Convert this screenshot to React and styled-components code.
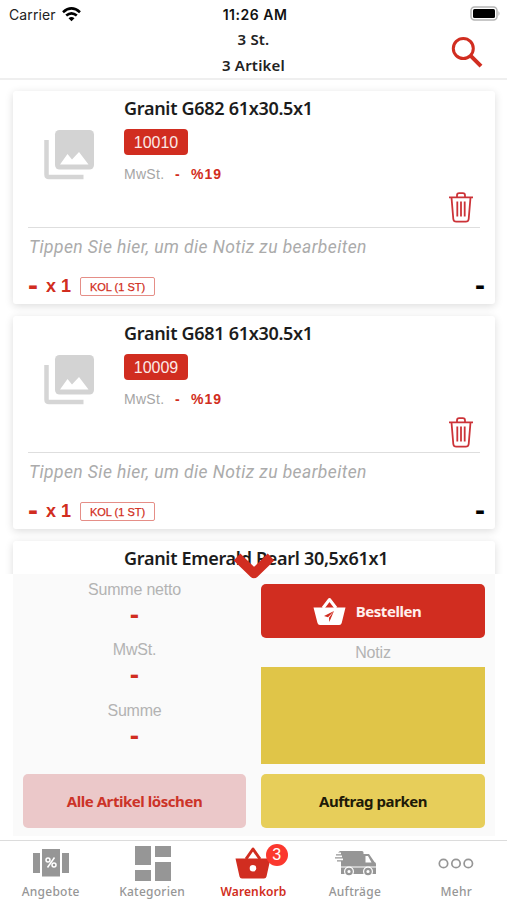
import styled, { createGlobalStyle, css } from "styled-components";

const GlobalStyle = createGlobalStyle`
  * {
    box-sizing: border-box;
  }
  body {
    margin: 0;
    background: #fff;
    font-family: "Liberation Sans", sans-serif;
  }
  button {
    border: none;
    padding: 0;
    background: none;
  }
`;

const red = "#d12d20";

const Screen = styled.div`
  display: flex;
  flex-direction: column;
  width: 507px;
  height: 900px;
  overflow: hidden;
  background: #fff;
`;

const StatusBar = styled.div`
  display: grid;
  grid-template-columns: 1fr auto 1fr;
  align-items: center;
  height: 27px;
  padding: 1px 6px 0 9px;
  font-family: Inter, sans-serif;
  font-size: 14px;
  color: #222;
`;
const Carrier = styled.div`
  display: flex;
  align-items: center;
  gap: 6px;
  letter-spacing: 0.1px;
`;
const Clock = styled.div`
  font-weight: 600;
  letter-spacing: 0.5px;
  color: #111;
`;
const BatteryIcon = styled.svg`
  justify-self: end;
  margin-top: -2px;
`;

const Header = styled.header`
  display: grid;
  grid-template-columns: 1fr auto 1fr;
  height: 53px;
  border-bottom: 2px solid #efefef;
`;
const Totals = styled.div`
  grid-column: 2;
  font-family: "Noto Sans", sans-serif;
  font-size: 15px;
  font-weight: 600;
  letter-spacing: 0.2px;
  line-height: 25.5px;
  text-align: center;
  color: #222;
`;
const SearchButton = styled.button`
  justify-self: end;
  width: 32px;
  height: 32px;
  margin: 9px 24px 0 0;
`;

const List = styled.main`
  display: flex;
  flex-direction: column;
  gap: 12px;
  height: 494px;
  padding: 11px 12px 0 13px;
  overflow: hidden;
`;
const Card = styled.article`
  display: flex;
  flex-direction: column;
  flex: none;
  height: 213px;
  padding: 0 15px;
  border-radius: 3px;
  background: #fff;
  box-shadow: 0 2px 8px rgba(0, 0, 0, 0.14);
`;
const CardTop = styled.div`
  display: flex;
  height: 137px;
  border-bottom: 1px solid #dedede;
`;
const Thumb = styled.svg`
  flex: none;
  margin: 38px 29px 0 16px;
`;
const Info = styled.div`
  flex: 1;
`;
const Title = styled.h2`
  margin: 0;
  padding: 3px 0 1px;
  font-family: "Noto Sans", sans-serif;
  font-size: 18px;
  font-weight: 600;
  letter-spacing: -0.3px;
  line-height: 28px;
  white-space: nowrap;
  color: #1c1c1c;
`;
const Sku = styled.div`
  width: 64px;
  height: 26px;
  margin-top: 6px;
  border-radius: 4px;
  background: ${red};
  color: #fbe9e7;
  font-size: 16px;
  line-height: 27px;
  text-align: center;
`;
const Tax = styled.div`
  display: flex;
  gap: 10.5px;
  margin-top: 10px;
  font-size: 14px;
  letter-spacing: 0.3px;
  line-height: 18px;
  color: #a5a5a5;

  b {
    color: ${red};
    letter-spacing: 1px;
  }
`;
const TrashButton = styled.button`
  align-self: flex-end;
  width: 24px;
  height: 31px;
  margin: 0 7.5px 4px 0;
`;
const Note = styled.div`
  height: 40px;
  padding-left: 1px;
  font-family: Roboto, sans-serif;
  font-size: 17.5px;
  font-style: italic;
  letter-spacing: 0.41px;
  line-height: 39px;
  white-space: nowrap;
  color: #ababab;
`;
const CardFoot = styled.div`
  display: flex;
  align-items: center;
  height: 36px;
  margin-right: -5px;
`;
const Dash = styled.b`
  height: 24px;
  color: ${(p) => p.$color || red};
  font-size: ${(p) => p.$size || 30}px;
  line-height: 22px;
`;
const Quantity = styled.b`
  margin: 0 9px 0 8px;
  font-size: 18px;
  color: ${red};
`;
const Unit = styled.span`
  width: 75px;
  height: 19px;
  margin-right: auto;
  border: 1px solid #e58e87;
  border-radius: 2px;
  color: ${red};
  font-size: 11px;
  line-height: 18px;
  text-align: center;
  -webkit-text-stroke: 0.25px ${red};
`;

const Summary = styled.section`
  position: relative;
  display: grid;
  grid-template-columns: 223px 224px;
  grid-template-rows: 181px 54px;
  column-gap: 15px;
  row-gap: 9px;
  height: 262px;
  margin: 0 12px 4px 13px;
  padding: 10px;
  background: #fafafa;
`;
/* hangs over the last visible card */
const CollapseButton = styled.button`
  position: absolute;
  top: -24px;
  left: 219px;
  width: 44px;
  height: 32px;
`;
const Sums = styled.div`
  display: flex;
  flex-direction: column;
  align-items: center;
`;
const Label = styled.div`
  height: 29px;
  font-size: 16px;
  letter-spacing: -0.2px;
  line-height: 30px;
  color: #b3b3b3;
`;
const Sum = styled.div`
  display: flex;
  flex-direction: column;
  align-items: center;
  height: 60.5px;
  margin-top: ${(p) => (p.$first ? "-9.5px" : 0)};
`;
const Order = styled.div`
  display: flex;
  flex-direction: column;
`;
const ActionButton = styled.button`
  display: flex;
  align-items: center;
  justify-content: center;
  gap: 10px;
  height: 54px;
  border-radius: 5px;
  font-family: "Noto Sans", sans-serif;
  font-size: 15px;
  font-weight: 700;
  letter-spacing: -0.45px;
  color: #1e1a08;
  background: #e7ce5a;

  ${(p) =>
    p.$kind === "primary" &&
    css`
      padding-right: 12px;
      color: #fff0ee;
      background: #d12d20;
    `}
  ${(p) =>
    p.$kind === "danger" &&
    css`
      color: #cc3328;
      background: #ebc8c9;
    `}
`;
const NoteLabel = styled(Label)`
  text-align: center;
`;
const NoteArea = styled.div`
  height: 97px;
  background: #e0c548;
`;

const TabBar = styled.nav`
  display: grid;
  grid-template-columns: repeat(5, 1fr);
  height: 60px;
  border-top: 1px solid #dcdcdc;
`;
const Tab = styled.div`
  position: relative;
  display: flex;
  flex-direction: column;
  align-items: center;
  padding-top: 2px;
  font-family: "Noto Sans", sans-serif;
  font-size: 12px;
  font-weight: ${(p) => (p.$active ? 600 : 500)};
  letter-spacing: ${(p) => (p.$active ? 0.1 : 0.25)}px;
  line-height: 17px;
  color: ${(p) => (p.$active ? red : "#969696")};
`;
const Badge = styled.span`
  position: absolute;
  top: 3px;
  left: 63px;
  width: 22px;
  height: 22px;
  border-radius: 50%;
  background: #fb382e;
  color: #fff;
  font-family: "Liberation Sans", sans-serif;
  font-size: 16px;
  font-weight: 400;
  letter-spacing: 0;
  line-height: 22px;
  text-align: center;
`;

const TabIcon = ({ children }) => (
  <svg width="44" height="40" viewBox="0 0 44 40" fill="currentColor">
    {children}
  </svg>
);

const tabs = [
  {
    name: "Angebote",
    icon: (
      <>
        <path d="M4 10h7v20H4zM13 6h18v27.5H13zM33 10h7v20h-7z" />
        <g fill="none" stroke="#fff" strokeWidth="1.5">
          <circle cx="19" cy="17" r="2" />
          <circle cx="25" cy="22" r="2" />
          <path d="M25.5 14.5l-7 10" />
        </g>
      </>
    ),
  },
  {
    name: "Kategorien",
    icon: <path d="M5 3h16v19H5zM5 27h16v11H5zM25 3h16v11H25zM25 19h16v19H25z" />,
  },
  {
    name: "Warenkorb",
    badge: 3,
    active: true,
    icon: (
      <>
        <path d="M15 16l7-10 7 10" fill="none" stroke="currentColor" strokeWidth="3" strokeLinejoin="round" />
        <path
          fillRule="evenodd"
          d="M4.5 15.5h35l-4 18q-.5 2-2.5 2h-22q-2 0-2.5-2zM22 22a3.3 3.3 0 1 0 0 6.6a3.3 3.3 0 0 0 0-6.6z"
        />
      </>
    ),
  },
  {
    name: "Aufträge",
    icon: (
      <g transform="translate(-1 0)">
        <path d="M8 8h22q1.500 0 1.500 1.500V11h5.500l5.500 8q1.500.5 1.500 2v10H9V18.500H5v-1.300h6v-1.700H3v-1.300h7v-1.700H4v-1.300h5V9.500H6z" />
        <path d="M33.500 13h2.500l3.500 6.500h-6z" fill="#fff" />
        <path d="M9 24h35" stroke="#fff" strokeWidth="1" />
        <circle cx="17" cy="28.500" r="5" fill="#fff" />
        <circle cx="36" cy="28.500" r="5" fill="#fff" />
        <circle cx="17" cy="28.500" r="2.700" fill="none" stroke="currentColor" strokeWidth="2.200" />
        <circle cx="36" cy="28.500" r="2.700" fill="none" stroke="currentColor" strokeWidth="2.200" />
      </g>
    ),
  },
  {
    name: "Mehr",
    icon: (
      <g fill="none" stroke="currentColor" strokeWidth="1.7">
        <circle cx="9.500" cy="20.500" r="4.200" />
        <circle cx="22" cy="20.500" r="4.200" />
        <circle cx="34.300" cy="20.500" r="4.200" />
      </g>
    ),
  },
];

const articles = [
  { title: "Granit G682 61x30.5x1", sku: "10010" },
  { title: "Granit G681 61x30.5x1", sku: "10009" },
];

const Article = ({ title, sku }) => (
  <Card>
    <CardTop>
      <Thumb width="51" height="51" viewBox="0 0 51 51">
        <path
          d="M2.500 11v34.500q0 2.500 2.500 2.500h34.500"
          fill="none"
          stroke="#d5d5d5"
          strokeWidth="4.500"
        />
        <rect x="11" y="1" width="39" height="39.500" rx="4.500" fill="#d3d3d3" />
        <path d="M16 35.500l7.500-10.500 4.500 5.500 7-7.500 9.500 12.500z" fill="#fff" />
      </Thumb>
      <Info>
        <Title>{title}</Title>
        <Sku>{sku}</Sku>
        <Tax>
          <span>MwSt.</span>
          <b>-</b>
          <b>%19</b>
        </Tax>
      </Info>
      <TrashButton>
        <svg width="24" height="31" viewBox="0 0 24 31" fill="none" stroke="#cc3338" strokeWidth="1.8">
          <path d="M0 5.300h24M8 5V3.500Q8 1.200 10.200 1.200h3.600Q16 1.200 16 3.500V5" />
          <path d="M2.500 5.500l1.800 21.500q.3 2.700 3 2.700h9.400q2.700 0 3-2.700L21.500 5.500" />
          <path d="M8.300 9.500v15M12 9.500v15M15.700 9.500v15" />
        </svg>
      </TrashButton>
    </CardTop>
    <Note>Tippen Sie hier, um die Notiz zu bearbeiten</Note>
    <CardFoot>
      <Dash>-</Dash>
      <Quantity>x 1</Quantity>
      <Unit>KOL (1 ST)</Unit>
      <Dash $color="#000">-</Dash>
    </CardFoot>
  </Card>
);

const PeekCard = styled(Card)`
  padding-left: 111px;
`;

export default function App() {
  return (
    <Screen>
      <GlobalStyle />
      <StatusBar>
        <Carrier>
          Carrier
          <svg width="19" height="15" viewBox="0 0 19 15" fill="none" stroke="#000" strokeWidth="2.6">
            <path d="M1 5.200q8.500-7.500 17 0" />
            <path d="M4.200 8.600q5.300-4.600 10.600 0" />
            <path d="M9.500 14.200L6.500 11.200q3-2.400 6 0z" fill="#000" stroke="none" />
          </svg>
        </Carrier>
        <Clock>11:26 AM</Clock>
        <BatteryIcon width="31" height="15" viewBox="0 0 31 15">
          <rect x="1" y="1" width="26" height="13" rx="3.500" fill="#fff" stroke="#b5b5b5" strokeWidth="1.500" />
          <rect x="3" y="3" width="22" height="9" rx="1.500" />
          <path d="M28.500 5q2 2.500 0 5z" fill="#aaa" />
        </BatteryIcon>
      </StatusBar>

      <Header>
        <Totals>
          <div>3 St.</div>
          <div>3 Artikel</div>
        </Totals>
        <SearchButton>
          <svg width="32" height="32" viewBox="0 0 32 32" fill="none" stroke={red}>
            <circle cx="12.300" cy="12.500" r="10" strokeWidth="3" />
            <path d="M19.500 19.700l10.500 10.500" strokeWidth="4" />
          </svg>
        </SearchButton>
      </Header>

      <List>
        {articles.map((article) => (
          <Article key={article.sku} {...article} />
        ))}
        <PeekCard>
          <Title>Granit Emerald Pearl 30,5x61x1</Title>
        </PeekCard>
      </List>

      <Summary>
        <CollapseButton>
          <svg width="44" height="32" viewBox="0 0 44 32">
            <path
              d="M5 7l17 16.500L39 7"
              fill="none"
              stroke={red}
              strokeWidth="9.500"
              strokeLinejoin="round"
            />
          </svg>
        </CollapseButton>
        <Sums>
          <Sum $first>
            <Label>Summe netto</Label>
            <Dash $size={28}>-</Dash>
          </Sum>
          <Sum>
            <Label>MwSt.</Label>
            <Dash $size={28}>-</Dash>
          </Sum>
          <Sum>
            <Label>Summe</Label>
            <Dash $size={28}>-</Dash>
          </Sum>
        </Sums>
        <Order>
          <ActionButton $kind="primary">
            <svg width="33" height="29" viewBox="0 0 33 29">
              <path d="M10 11l6.500-8.500L23 11" fill="none" stroke="#fff" strokeWidth="3" strokeLinejoin="round" />
              <path d="M.5 10.500h32l-3.800 15.500q-.5 2-2.500 2H7q-2 0-2.500-2z" fill="#fff" />
              <path d="M21 14l-10 5 4 1.200zM21 14l-5 6.800.3 4.200z" fill={red} />
            </svg>
            Bestellen
          </ActionButton>
          <NoteLabel>Notiz</NoteLabel>
          <NoteArea />
        </Order>
        <ActionButton $kind="danger">Alle Artikel löschen</ActionButton>
        <ActionButton>Auftrag parken</ActionButton>
      </Summary>

      <TabBar>
        {tabs.map(({ name, icon, active, badge }) => (
          <Tab key={name} $active={active}>
            <TabIcon>{icon}</TabIcon>
            {name}
            {badge && <Badge>{badge}</Badge>}
          </Tab>
        ))}
      </TabBar>
    </Screen>
  );
}
